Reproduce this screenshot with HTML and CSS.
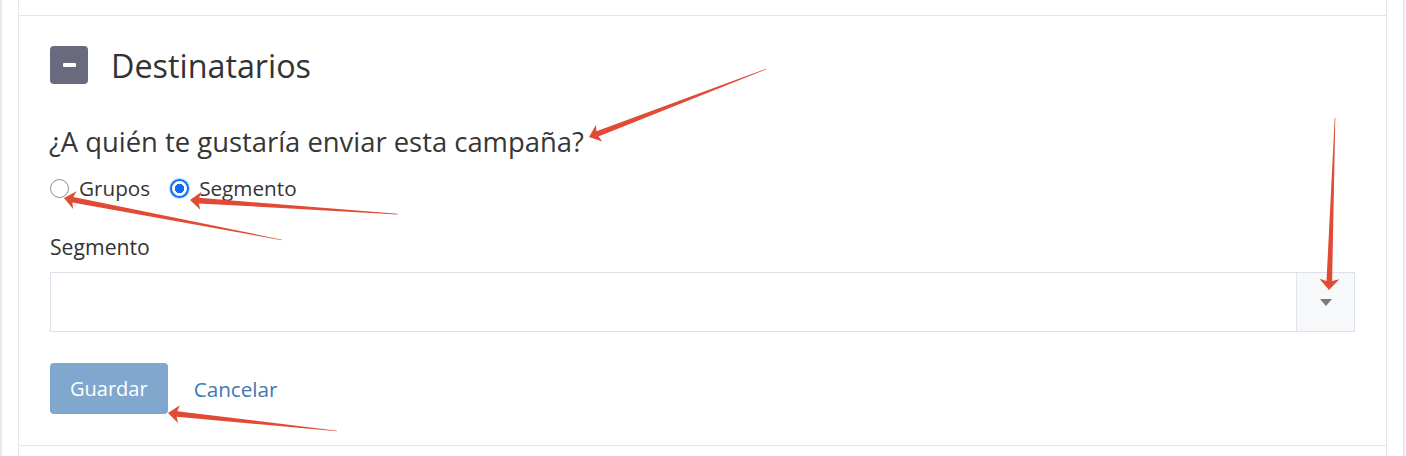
FILE: index.html
```html
<!DOCTYPE html>
<html lang="es">
  <head>
    <meta charset="UTF-8" />
    <meta name="viewport" content="width=device-width, initial-scale=1.0" />
    <title>Destinatarios</title>
    <link rel="stylesheet" href="styles.css">
  </head>
  <body>
    <div class="panel">
      <div class="card">
        <div class="card-prev"></div>

        <section class="block">
          <div class="block-head">
            <button class="toggle" type="button"><span class="toggle-bar"></span></button>
            <h2 class="block-title">Destinatarios</h2>
          </div>

          <p class="question">¿A quién te gustaría enviar esta campaña?</p>

          <div class="choices">
            <label class="choice"><input type="radio" name="dest" class="radio" /> Grupos</label>
            <label class="choice"><input type="radio" name="dest" class="radio" checked /> Segmento</label>
          </div>

          <label class="field-label">Segmento</label>
          <div class="select">
            <div class="select-value"></div>
            <div class="select-arrow"><span class="caret"></span></div>
          </div>

          <div class="actions">
            <button class="btn-save" type="button">Guardar</button>
            <a class="link-cancel" href="#">Cancelar</a>
          </div>
        </section>

        <div class="card-next"></div>
      </div>

      <!-- annotation arrows drawn over the form -->
      <svg class="marks" width="1406" height="456" viewBox="0 0 1406 456">
        <g fill="#e04b36">
          <polygon transform="translate(589 137) rotate(-21)" points="0,0 11,-9 9,-2.8 190,-0.3 190,0.3 9,2.8 11,9" />
          <polygon transform="translate(64 198) rotate(10.9)" points="0,0 11,-9 9,-2.8 222,-0.3 222,0.3 9,2.8 11,9" />
          <polygon transform="translate(190 200) rotate(3.9)" points="0,0 11,-9 9,-2.8 208,-0.3 208,0.3 9,2.8 11,9" />
          <polygon transform="translate(1329 290) rotate(-88)" points="0,0 11,-10 9,-2.8 172,-0.3 172,0.3 9,2.8 11,10" />
          <polygon transform="translate(168 413) rotate(6.1)" points="0,0 11,-9 9,-2.8 170,-0.3 170,0.3 9,2.8 11,9" />
        </g>
      </svg>
    </div>
  </body>
</html>
```

FILE: styles.css
```css
* {
  box-sizing: border-box;
}

body {
  margin: 0;
  background: #fff;
  font-family: 'Open Sans', sans-serif;
  color: #333;
}

.panel {
  position: relative;
  width: 1405px;
  height: 456px;
  padding: 0 16px;
  border-left: 2px solid #e8e8ee;
  border-right: 2px solid #e8e8ee;
  overflow: hidden;
}
.card {
  height: 100%;
  border-left: 1px solid #e6e6ea;
  border-right: 1px solid #e6e6ea;
}
.card-prev {
  height: 15px;
}
.card-next {
  border-top: 1px solid #e6e6ea;
  height: 20px;
}

.block {
  border-top: 1px solid #e6e6ea;
  padding: 30px 31px 31px;
}
.block-head {
  display: flex;
  align-items: center;
  gap: 23px;
  height: 38px;
}
.toggle {
  width: 38px;
  height: 38px;
  border: 0;
  border-radius: 4px;
  background: #696a7e;
  display: flex;
  align-items: center;
  justify-content: center;
  padding: 0;
}
.toggle-bar {
  width: 13px;
  height: 4px;
  background: #fff;
  border-radius: 1px;
}
.block-title {
  margin: 0;
  font-size: 32.3px;
  font-weight: 400;
  line-height: 38px;
  color: #333;
}

.question {
  margin: 42px 0 0 -1px;
  font-size: 27.4px;
  line-height: 32px;
  color: #363636;
}

.choices {
  display: flex;
  gap: 20px;
  margin-top: 18px;
  height: 24px;
}
.choice {
  display: flex;
  align-items: center;
  gap: 10px;
  font-size: 20.7px;
  line-height: 24px;
  color: #333;
}
.radio {
  appearance: none;
  margin: 0;
  width: 19px;
  height: 19px;
  border: 1px solid #8d8d8d;
  border-radius: 50%;
  background: #fff;
}
.radio:checked {
  border: 2px solid #0d6efd;
  background: radial-gradient(circle, #0d6efd 0 4.5px, #fff 5px);
  box-shadow: 0 0 0 1px #b6d3ff;
}

.field-label {
  display: block;
  margin-top: 35px;
  font-size: 21.2px;
  line-height: 24px;
  color: #333;
}

.select {
  display: flex;
  margin-top: 13px;
  height: 60px;
  border: 1px solid #dde1ea;
  background: #fff;
}
.select-value {
  flex: 1;
}
.select-arrow {
  width: 58px;
  border-left: 1px solid #e1e4ea;
  background: #f7f8fa;
  display: flex;
  align-items: center;
  justify-content: center;
}
.caret {
  width: 0;
  height: 0;
  border-left: 6px solid transparent;
  border-right: 6px solid transparent;
  border-top: 7px solid #7a7a7a;
}

.actions {
  display: flex;
  align-items: center;
  gap: 26px;
  margin-top: 31px;
}
.btn-save {
  height: 51px;
  padding: 0 20px;
  border: 0;
  border-radius: 4px;
  background: #80a8cf;
  color: #fff;
  font-family: 'Open Sans', sans-serif;
  font-size: 20px;
  line-height: 51px;
}
.link-cancel {
  font-size: 20.7px;
  color: #3b7ab8;
  text-decoration: none;
}

.marks {
  position: absolute;
  top: 0;
  left: -2px;
  pointer-events: none;
}
```
